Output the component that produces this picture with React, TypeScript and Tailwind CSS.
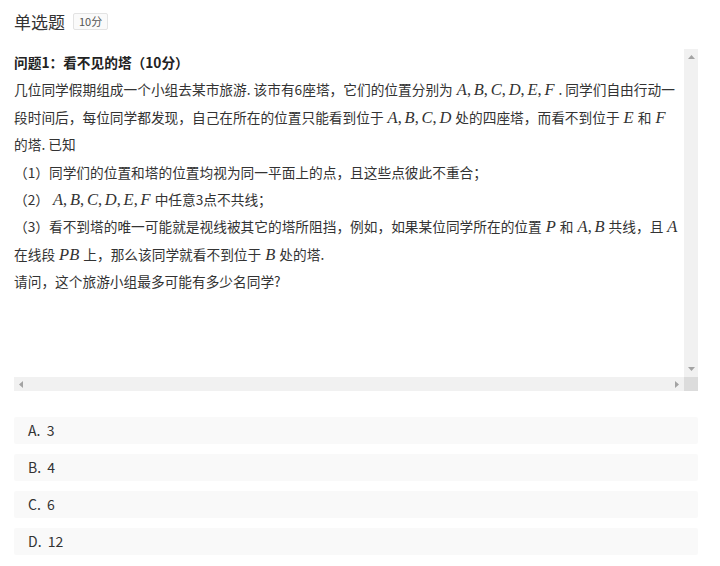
import React from "react";

const cjk = { fontFamily: '"Noto Sans CJK SC", "Noto Sans", sans-serif' };

function M({ t }: { t: string }) {
  const parts: React.ReactNode[] = [];
  t.split("").forEach((c, i) => {
    if (c === ",") {
      parts.push(
        <span key={i} className="not-italic mr-[0.1667em]">
          ,
        </span>
      );
    } else {
      parts.push(<span key={i}>{c}</span>);
    }
  });
  return (
    <span
      className="italic text-[16.5px] mx-[4px]"
      style={{ fontFamily: '"Liberation Serif", "DejaVu Serif", serif' }}
    >
      {parts}
    </span>
  );
}

function Arrow({ dir }: { dir: "up" | "down" | "left" | "right" }) {
  const pts =
    dir === "up"
      ? "0,4 3.5,0 7,4"
      : dir === "down"
      ? "0,0 7,0 3.5,4"
      : dir === "left"
      ? "4,0 4,7 0,3.5"
      : "0,0 0,7 4,3.5";
  const w = dir === "up" || dir === "down" ? 7 : 4;
  const h = dir === "up" || dir === "down" ? 4 : 7;
  return (
    <svg width={w} height={h} viewBox={`0 0 ${w} ${h}`}>
      <polygon points={pts} fill="#a3a3a3" />
    </svg>
  );
}

export default function App() {
  const options = ["A.  3", "B.  4", "C.  6", "D.  12"];
  return (
    <div className="w-[720px] h-[566px] bg-white text-[#333]" style={cjk}>
      <div className="flex items-center gap-[8px] px-[14px] pt-[10px] h-[33px]">
        <span className="text-[17px] text-[#333]">单选题</span>
        <span className="text-[11px] leading-[15px] px-[5px] border border-[#e3e3e3] bg-[#fafafa] rounded-[2px] text-[#555]">
          10分
        </span>
      </div>

      <div className="mx-[14px] mt-[16px] w-[684px] flex flex-col">
        <div className="flex h-[328px]">
          <div className="flex-1 overflow-hidden text-[13.7px] leading-[27.4px] whitespace-nowrap text-[#333]">
            <div className="font-bold text-[#222]">问题1：看不见的塔（10分）</div>
            <div>
              几位同学假期组成一个小组去某市旅游. 该市有6座塔，它们的位置分别为
              <M t="A,B,C,D,E,F" />. 同学们自由行动一
            </div>
            <div>
              段时间后，每位同学都发现，自己在所在的位置只能看到位于
              <M t="A,B,C,D" />处的四座塔，而看不到位于
              <M t="E" />和
              <M t="F" />
            </div>
            <div>的塔. 已知</div>
            <div>（1）同学们的位置和塔的位置均视为同一平面上的点，且这些点彼此不重合；</div>
            <div>
              （2）
              <M t="A,B,C,D,E,F" />中任意3点不共线；
            </div>
            <div>
              （3）看不到塔的唯一可能就是视线被其它的塔所阻挡，例如，如果某位同学所在的位置
              <M t="P" />和
              <M t="A,B" />共线，且
              <M t="A" />
            </div>
            <div>
              在线段
              <M t="PB" />上，那么该同学就看不到位于
              <M t="B" />处的塔.
            </div>
            <div>请问，这个旅游小组最多可能有多少名同学?</div>
          </div>
          <div className="w-[14px] bg-[#f1f1f1] flex flex-col items-center justify-between pt-[6px] pb-[6px]">
            <Arrow dir="up" />
            <Arrow dir="down" />
          </div>
        </div>
        <div className="flex h-[14px]">
          <div className="flex-1 bg-[#f1f1f1] flex items-center justify-between px-[5px]">
            <Arrow dir="left" />
            <Arrow dir="right" />
          </div>
          <div className="w-[14px] bg-[#dcdcdc]" />
        </div>
      </div>

      <div className="mx-[14px] mt-[26px] w-[684px] flex flex-col gap-[10px]">
        {options.map((o) => (
          <div
            key={o}
            className="h-[27px] bg-[#f9f9f9] rounded-[2px] flex items-center pl-[14px] text-[14px] text-[#333] whitespace-pre"
          >
            {o}
          </div>
        ))}
      </div>
    </div>
  );
}
